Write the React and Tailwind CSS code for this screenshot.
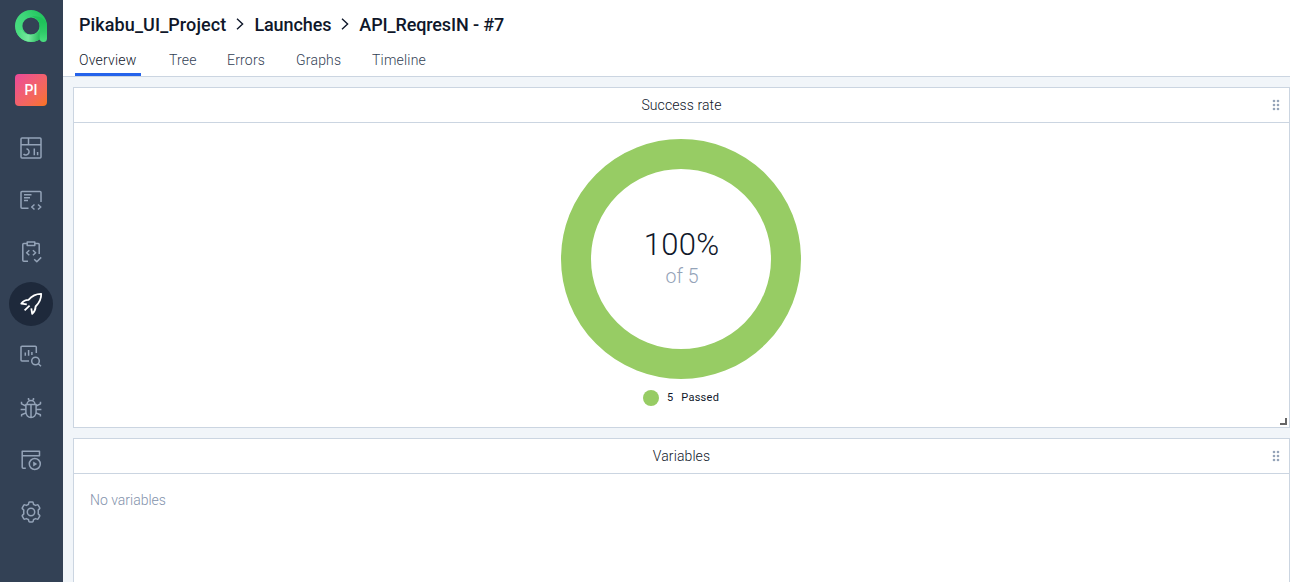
import React from "react";

function Logo() {
  return (
    <svg className="h-8 w-8" viewBox="0 0 32 32" fill="none">
      <defs>
        <linearGradient id="ring" x1="0" y1="24" x2="28" y2="4" gradientUnits="userSpaceOnUse">
          <stop offset="0" stopColor="#4ade80" />
          <stop offset="0.5" stopColor="#3fd67a" />
          <stop offset="1" stopColor="#22c55e" />
        </linearGradient>
        <linearGradient id="stem" x1="0" y1="12" x2="0" y2="32" gradientUnits="userSpaceOnUse">
          <stop offset="0" stopColor="#1fc25a" />
          <stop offset="0.5" stopColor="#2fcb68" />
          <stop offset="1" stopColor="#4ade80" />
        </linearGradient>
        <linearGradient id="sweep" x1="3" y1="26" x2="26" y2="28" gradientUnits="userSpaceOnUse">
          <stop offset="0" stopColor="#4ade80" />
          <stop offset="0.45" stopColor="#78e89f" />
          <stop offset="1" stopColor="#1fb655" />
        </linearGradient>
      </defs>
      <circle cx="16" cy="16" r="12.3" stroke="url(#ring)" strokeWidth="7.4" />
      <path d="M7 20C9 25 17 27 25 21L27 27.500C22 33 12 33 6.500 28.800C3 26 1 22 1 20Z" fill="url(#sweep)" />
      <path d="M24.600 16C24.600 11 22 8 17 6.500C23 5 32 8 32 16V28.500C32 31 30.500 32 28.500 32C26 32 24.600 30.500 24.600 28Z" fill="url(#stem)" />
    </svg>
  );
}

const icons = {
  dashboard: (
    <>
      <rect x="2" y="2" width="20" height="20" rx="1" />
      <path d="M2 8.800h20M9.500 2v6.800M7.500 12.700a3.200 3.200 0 1 1-3 5.300M15.300 12.500v6.700M18.600 16v3.200" />
    </>
  ),
  cases: (
    <path d="M9.500 20.200H3a1 1 0 0 1-1-1V4.500a1 1 0 0 1 1-1h18a1 1 0 0 1 1 1V14M5 6.800h7.500M5 9.700h6M5 12.600h4M15.500 16.500l-2.800 2.500 2.800 2.500M19 16.500l2.800 2.500-2.800 2.500" />
  ),
  plans: (
    <path d="M8 3.500H4.800a1 1 0 0 0-1 1v15.700a1 1 0 0 0 1 1H9M16 3.500h3.200a1 1 0 0 1 1 1V14M8.200 2h7.600v3.500H8.200zM10.300 10.200l-2.700 2.500 2.700 2.500M13.900 10.200l2.700 2.500-2.700 2.500M15.200 19.200l2.600 2.500 4.400-4.300" />
  ),
  launches: (
    <path d="M7.800 12.300 2.300 11.600C4.300 9 6.600 7.900 9.500 7.900C13.300 3.500 16.800 1.800 22.200 1.900C22.400 7.300 20.400 10.700 16.600 14.500C16.600 17.400 15.500 19.700 13.200 21.800L12.300 16.400M10.600 13.600 5.600 18.400" />
  ),
  analytics: (
    <>
      <path d="M10 17H3a1 1 0 0 1-1-1V3.200a1 1 0 0 1 1-1h13.300a1 1 0 0 1 1 1V9M6.300 8.500v3.300M9.600 6v5.800M12.900 8v3" />
      <circle cx="16.500" cy="17" r="3.800" />
      <path d="m19.300 19.800 2.700 2.500" />
    </>
  ),
  defects: (
    <path d="M6.900 8.500h10.200v7.800a5.100 5.100 0 0 1-10.200 0zM8 8.500a4 4 0 0 1 8 0M12 9v12.300M9.500 2v1.500l1 1.300M14.500 2v1.500l-1 1.300M2.500 5.800v2l4.400 2.200M21.500 5.800v2L17.100 10M1.600 13.500h5.300M17.100 13.500h5.300M2.600 20.600v-1.800L7 16.900M21.400 20.600v-1.800L17 16.900" />
  ),
  jobs: (
    <>
      <path d="M6.800 20.200H4.200a1 1 0 0 1-1-1V3.200h17.300V8M3.200 7.700h17.300V3.200" />
      <circle cx="15.800" cy="16" r="5.500" />
      <path d="m14.200 13.400 4 2.600-4 2.600z" fill="currentColor" stroke="none" />
    </>
  ),
  settings: (
    <>
      <path d="M10.700 2h2.600q.8 0 .9.800l.4 1.700q1 .3 1.900.9l1.700-.5q.7-.2 1.100.5l1.300 2.200q.4.700-.2 1.300l-1.200 1.200q.2 1.900 0 3.800l1.200 1.200q.6.600.2 1.300l-1.300 2.200q-.4.700-1.100.5l-1.700-.5q-.9.600-1.900.9l-.4 1.700q-.1.800-.9.800h-2.600q-.8 0-.9-.8l-.4-1.700q-1-.3-1.900-.9l-1.700.5q-.7.200-1.100-.5l-1.300-2.200q-.4-.7.200-1.300l1.200-1.200q-.2-1.900 0-3.800L3.600 8.900q-.6-.6-.2-1.300l1.300-2.200q.4-.7 1.100-.5l1.700.5q.9-.6 1.900-.9l.4-1.700q.1-.8.900-.8z" />
      <circle cx="12" cy="12" r="3.700" />
    </>
  ),
};

function Sidebar({ active }) {
  return (
    <nav className="flex w-[63px] shrink-0 flex-col items-center bg-[#334155] pt-[10px] pr-px">
      <Logo />
      <div className="mt-8 flex h-8 w-8 items-center justify-center rounded bg-linear-to-br from-[#ec4899] to-[#f97316] pt-px text-[14px] font-medium text-white">
        PI
      </div>
      <ul className="mt-5 flex flex-col gap-2">
        {Object.entries(icons).map(([name, drawing]) => (
          <li
            key={name}
            className={
              name === active
                ? "flex h-11 w-11 items-center justify-center rounded-full bg-[#1e293b] text-white"
                : "flex h-11 w-11 items-center justify-center text-[#94a3b8]"
            }
          >
            <svg
              className="h-6 w-6"
              viewBox="0 0 24 24"
              fill="none"
              stroke="currentColor"
              strokeWidth={name === active ? 1.8 : 1.5}
              strokeLinejoin="round"
            >
              {drawing}
            </svg>
          </li>
        ))}
      </ul>
    </nav>
  );
}

function Chevron() {
  return (
    <svg className="mx-[10px] h-3 w-2" viewBox="0 0 8 12" fill="none" stroke="#0f172a" strokeWidth="1.4">
      <path d="m1 .8 5.600 5.200L1 11.200" />
    </svg>
  );
}

function Header() {
  return (
    <header className="flex h-[77px] shrink-0 flex-col border-b border-[#cbd5e1] bg-white pl-4">
      <h1 className="flex h-[50px] items-center pb-[2px] text-[18px] font-medium text-[#0f172a]">
        <span className="tracking-[0.1px]">Pikabu_UI_Project</span>
        <Chevron />
        <span className="tracking-[-0.1px]">Launches</span>
        <Chevron />
        <span className="tracking-[-0.12px]">API_ReqresIN - #7</span>
      </h1>
      <div className="-ml-1 flex h-[26px] gap-[22px] text-[14px] leading-[20px] font-light tracking-[0.2px] text-[#334155]">
        <span className="w-[66px] border-b-[3px] border-[#2563eb] pl-1 text-[#0f172a]">Overview</span>
        <span className="w-9 pl-[6px]">Tree</span>
        <span className="w-[47px] pl-[6px]">Errors</span>
        <span className="w-[54px] pl-[6px]">Graphs</span>
        <span className="pl-[6px]">Timeline</span>
      </div>
    </header>
  );
}

function DragHandle() {
  return (
    <svg className="h-3 w-2" viewBox="0 0 8 12" fill="#94a3b8">
      {[2, 6].map((x) => [2, 6, 10].map((y) => <circle key={x + "-" + y} cx={x} cy={y} r="1.300" />))}
    </svg>
  );
}

function CardHeader({ title }) {
  return (
    <div className="grid h-[35px] shrink-0 grid-cols-[1fr_auto_1fr] items-center border-b border-[#cbd5e1] text-[14px] font-light text-[#0f172a]">
      <span />
      <h2 className="pt-px tracking-[0.1px]">{title}</h2>
      <span className="flex justify-end pr-[9px]">
        <DragHandle />
      </span>
    </div>
  );
}

function SuccessRate() {
  return (
    <section className="flex h-[341px] shrink-0 flex-col border border-[#cbd5e1] bg-white">
      <CardHeader title="Success rate" />
      <div className="relative flex flex-1 flex-col items-center pt-4 pr-px">
        <div className="flex h-60 w-60 flex-col items-center justify-center rounded-full border-[30px] border-[#97cc64]">
          <span className="pl-px text-[31px] leading-9 font-light tracking-[0.3px] text-[#0f172a]">100%</span>
          <span className="pl-[2px] text-[19.5px] leading-7 font-light text-[#94a3b8]">of 5</span>
        </div>
        <div className="mt-[11px] flex h-4 items-center text-[11px] tracking-[0.25px] text-[#0f172a]">
          <span className="mr-2 h-4 w-4 rounded-full bg-[#97cc64]" />
          <span className="mr-2">5</span>
          <span>Passed</span>
        </div>
        <span className="absolute right-[2px] bottom-[2px] h-[7px] w-[7px] border-r-2 border-b-2 border-[#666666]" />
      </div>
    </section>
  );
}

function Variables() {
  return (
    <section className="flex h-[300px] shrink-0 flex-col border border-[#cbd5e1] bg-white">
      <CardHeader title="Variables" />
      <p className="px-4 pt-4 text-[14px] leading-[21px] font-light text-[#8392ab]">No variables</p>
    </section>
  );
}

export default function App() {
  return (
    <div className="flex h-screen w-screen overflow-hidden bg-[#f1f5f9] font-[Roboto,sans-serif]">
      <Sidebar active="launches" />
      <div className="flex min-w-0 flex-1 flex-col">
        <Header />
        <main className="flex flex-1 flex-col gap-[10px] overflow-hidden pt-[10px] pl-[10px]">
          <SuccessRate />
          <Variables />
        </main>
      </div>
    </div>
  );
}
